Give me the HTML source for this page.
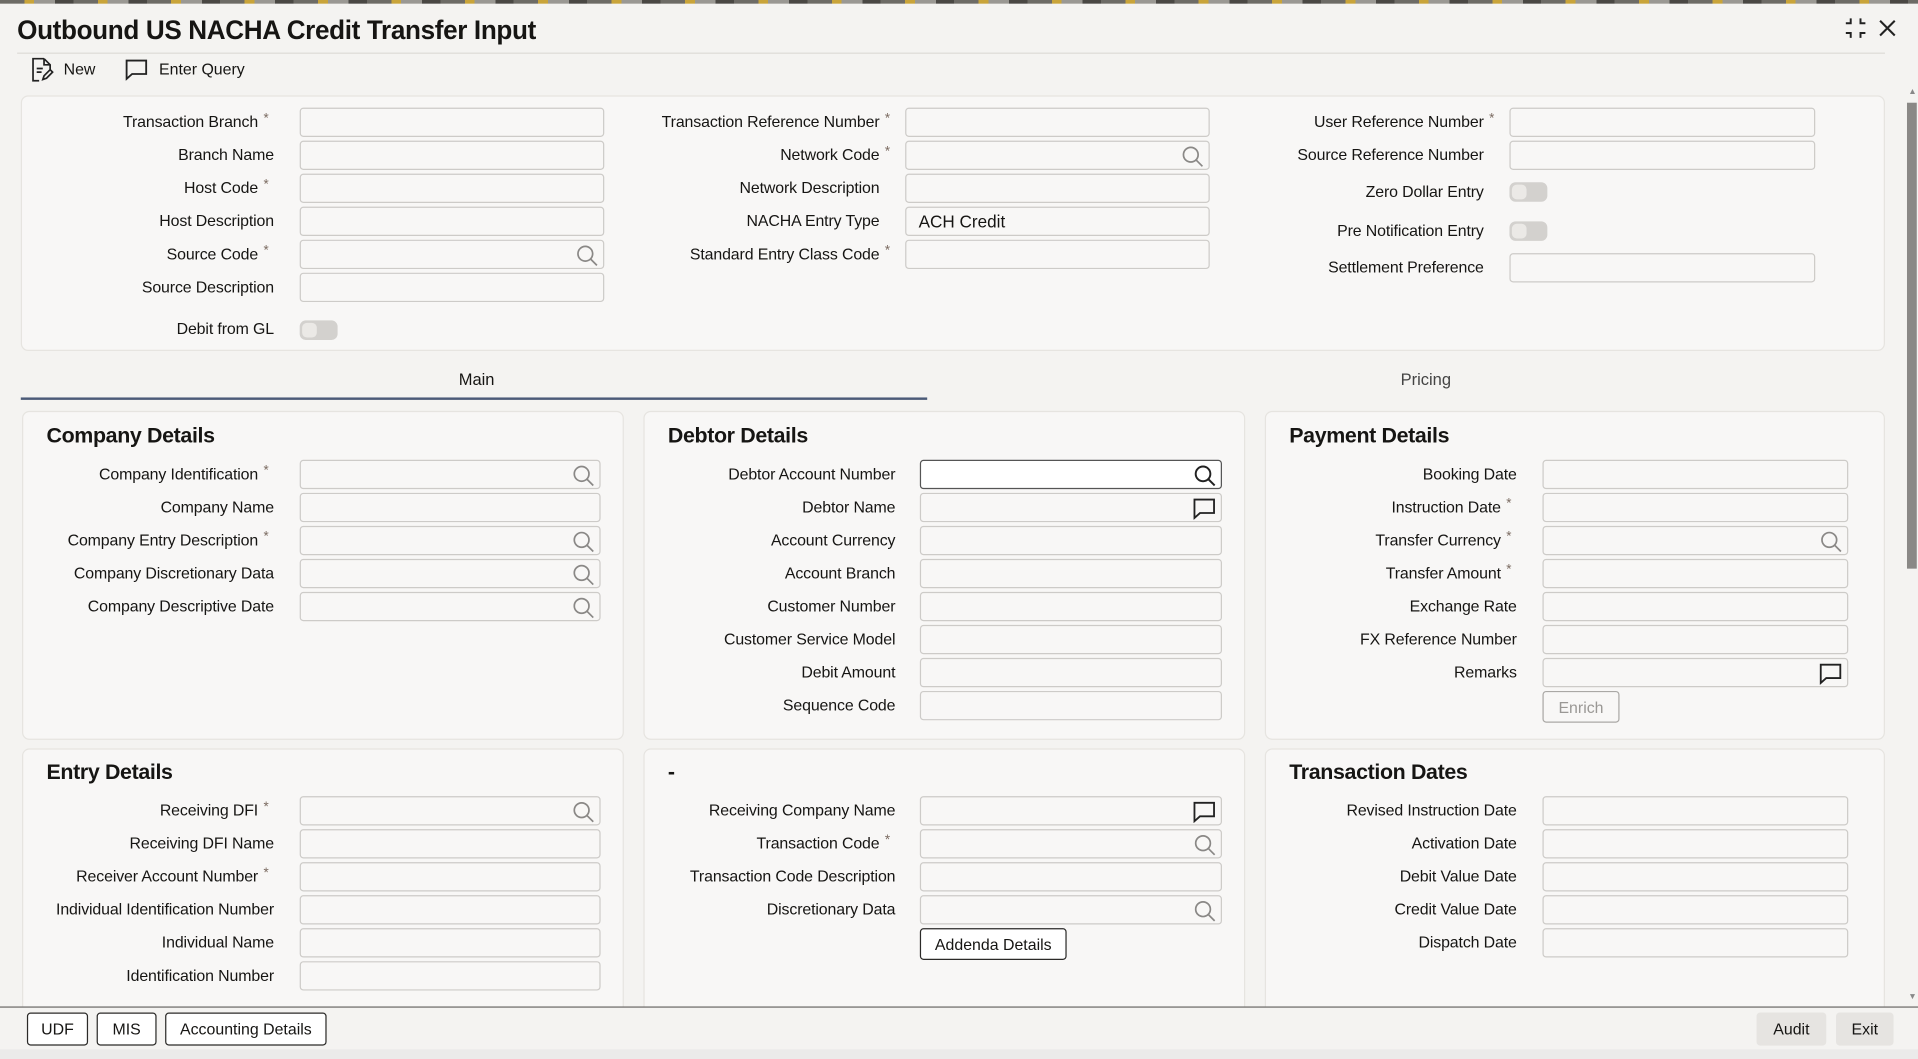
<!DOCTYPE html>
<html><head><meta charset="utf-8"><style>
html,body{margin:0;padding:0;width:1918px;height:1059px;overflow:hidden;background:#f3f2f0;font-family:"Liberation Sans",sans-serif;color:#161513}
#s{position:absolute;left:0;top:0;width:1568px;height:866px;transform:scale(1.22321,1.2229);transform-origin:0 0;background:#f4f3f1}
.a{position:absolute}
.l{position:absolute;left:0;text-align:right;font-size:13px;line-height:16px;white-space:nowrap;letter-spacing:-0.1px}
.l s{text-decoration:none;display:inline-block;width:13px;text-align:center;vertical-align:top;font-size:11px;line-height:10px;color:#7a6a60}
.i{position:absolute;height:24px;border:1px solid #cdcbc8;border-radius:3px;background:#f8f7f6;box-sizing:border-box}
.p{position:absolute;background:#f8f7f6;border:1px solid #e6e4e0;border-radius:6px;box-sizing:border-box}
.h{position:absolute;font-size:17.5px;font-weight:bold;letter-spacing:-0.3px}
.ic{position:absolute;right:4px;top:3px}
.t{position:absolute;width:31px;height:16px;border-radius:5px;background:#d3d1ce}
.t:after{content:"";position:absolute;left:2px;top:2px;width:12px;height:12px;border-radius:4px;background:#ebe9e6}
.b{position:absolute;height:27px;box-sizing:border-box;border:1px solid #2b2a28;border-radius:3px;background:#fff;font-size:13px;line-height:25px;text-align:center}
</style></head><body><div id="s">
<div class="a" style="left:0;top:0;width:1568px;height:3px;background:repeating-linear-gradient(90deg,#6d6b66 0 20px,#c9a43a 20px 28px,#9a9893 28px 45px,#4a4844 45px 60px)"></div>
<div class="a" style="left:14px;top:12px;font-size:22px;font-weight:bold;white-space:nowrap;transform:scaleX(0.97);transform-origin:0 0;letter-spacing:-0.3px">Outbound US NACHA Credit Transfer Input</div>
<svg class="a" style="left:1506px;top:13px" width="22" height="20" viewBox="0 0 22 20" fill="none" stroke="#222" stroke-width="1.6"><path d="M3 6h4V2M15 2v4h4M3 14h4v4M15 18v-4h4"/></svg>
<svg class="a" style="left:1536px;top:16px" width="14" height="14" viewBox="0 0 14 14" stroke="#222" stroke-width="1.7"><path d="M1 1l12 12M13 1L1 13"/></svg>
<div class="a" style="left:14px;top:43px;width:1527px;height:1px;background:#dddbd7"></div>
<svg class="a" style="left:24px;top:47px" width="20" height="20" viewBox="0 0 20 20" fill="none" stroke="#222" stroke-width="1.4"><path d="M12 1H3v18h5M12 1l5 5v5M12 1v5h5M6 9h5M6 12h4M11 18l1-3 5-5 2 2-5 5z"/></svg>
<div class="a" style="left:52px;top:49px;font-size:13px">New</div>
<svg class="a" style="left:102px;top:48px" width="19" height="18" viewBox="0 0 19 18" fill="none" stroke="#222" stroke-width="1.5"><path d="M1.5 1.5h16v11H6l-4.5 4z"/></svg>
<div class="a" style="left:130px;top:49px;font-size:13px">Enter Query</div>

<div class="p" style="left:17px;top:78px;width:1524px;height:209px"></div>
<div class="l" style="width:224px;top:92px">Transaction Branch<s>*</s></div><div class="i" style="left:245px;top:88px;width:249px"></div>
<div class="l" style="width:224px;top:119px">Branch Name</div><div class="i" style="left:245px;top:115px;width:249px"></div>
<div class="l" style="width:224px;top:146px">Host Code<s>*</s></div><div class="i" style="left:245px;top:142px;width:249px"></div>
<div class="l" style="width:224px;top:173px">Host Description</div><div class="i" style="left:245px;top:169px;width:249px"></div>
<div class="l" style="width:224px;top:200px">Source Code<s>*</s></div><div class="i" style="left:245px;top:196px;width:249px"><svg class="ic" width="18" height="18" viewBox="0 0 18 18" fill="none" stroke="#8a8886" stroke-width="1.4"><circle cx="7.5" cy="7.5" r="6"/><path d="M12 12l5 5"/></svg></div>
<div class="l" style="width:224px;top:227px">Source Description</div><div class="i" style="left:245px;top:223px;width:249px"></div>
<div class="l" style="width:224px;top:261px">Debit from GL</div><div class="t" style="left:245px;top:262px"></div>
<div class="l" style="width:732px;top:92px">Transaction Reference Number<s>*</s></div><div class="i" style="left:740px;top:88px;width:249px"></div>
<div class="l" style="width:732px;top:119px">Network Code<s>*</s></div><div class="i" style="left:740px;top:115px;width:249px"><svg class="ic" width="18" height="18" viewBox="0 0 18 18" fill="none" stroke="#8a8886" stroke-width="1.4"><circle cx="7.5" cy="7.5" r="6"/><path d="M12 12l5 5"/></svg></div>
<div class="l" style="width:719px;top:146px">Network Description</div><div class="i" style="left:740px;top:142px;width:249px"></div>
<div class="l" style="width:719px;top:173px">NACHA Entry Type</div><div class="i" style="left:740px;top:169px;width:249px;font-size:14px;line-height:22px;padding-left:10px">ACH Credit</div>
<div class="l" style="width:732px;top:200px">Standard Entry Class Code<s>*</s></div><div class="i" style="left:740px;top:196px;width:249px"></div>
<div class="l" style="width:1226px;top:92px">User Reference Number<s>*</s></div><div class="i" style="left:1234px;top:88px;width:250px"></div>
<div class="l" style="width:1213px;top:119px">Source Reference Number</div><div class="i" style="left:1234px;top:115px;width:250px"></div>
<div class="l" style="width:1213px;top:149px">Zero Dollar Entry</div><div class="t" style="left:1234px;top:149px"></div>
<div class="l" style="width:1213px;top:181px">Pre Notification Entry</div><div class="t" style="left:1234px;top:181px"></div>
<div class="l" style="width:1213px;top:211px">Settlement Preference</div><div class="i" style="left:1234px;top:207px;width:250px"></div>
<div class="a" style="left:1559px;top:84px;width:8px;height:381px;background:#8a8886"></div>
<div class="a" style="left:1560px;top:72px;font-size:7px;color:#888">▲</div>
<div class="a" style="left:1560px;top:812px;font-size:7px;color:#888">▼</div>
<div class="a" style="left:375px;top:303px;font-size:13.5px">Main</div>
<div class="a" style="left:1145px;top:303px;font-size:13.5px;color:#444">Pricing</div>
<div class="a" style="left:17px;top:325px;width:741px;height:2px;background:#4b5a78"></div>

<div class="p" style="left:18px;top:336px;width:492px;height:269px"></div>
<div class="p" style="left:526px;top:336px;width:492px;height:269px"></div>
<div class="p" style="left:1034px;top:336px;width:507px;height:269px"></div>
<div class="p" style="left:18px;top:612px;width:492px;height:240px"></div>
<div class="p" style="left:526px;top:612px;width:492px;height:240px"></div>
<div class="p" style="left:1034px;top:612px;width:507px;height:240px"></div>

<div class="h" style="left:38px;top:346px">Company Details</div>
<div class="l" style="width:224px;top:380px">Company Identification<s>*</s></div><div class="i" style="left:245px;top:376px;width:246px"><svg class="ic" width="18" height="18" viewBox="0 0 18 18" fill="none" stroke="#8a8886" stroke-width="1.4"><circle cx="7.5" cy="7.5" r="6"/><path d="M12 12l5 5"/></svg></div>
<div class="l" style="width:224px;top:407px">Company Name</div><div class="i" style="left:245px;top:403px;width:246px"></div>
<div class="l" style="width:224px;top:434px">Company Entry Description<s>*</s></div><div class="i" style="left:245px;top:430px;width:246px"><svg class="ic" width="18" height="18" viewBox="0 0 18 18" fill="none" stroke="#8a8886" stroke-width="1.4"><circle cx="7.5" cy="7.5" r="6"/><path d="M12 12l5 5"/></svg></div>
<div class="l" style="width:224px;top:461px">Company Discretionary Data</div><div class="i" style="left:245px;top:457px;width:246px"><svg class="ic" width="18" height="18" viewBox="0 0 18 18" fill="none" stroke="#8a8886" stroke-width="1.4"><circle cx="7.5" cy="7.5" r="6"/><path d="M12 12l5 5"/></svg></div>
<div class="l" style="width:224px;top:488px">Company Descriptive Date</div><div class="i" style="left:245px;top:484px;width:246px"><svg class="ic" width="18" height="18" viewBox="0 0 18 18" fill="none" stroke="#8a8886" stroke-width="1.4"><circle cx="7.5" cy="7.5" r="6"/><path d="M12 12l5 5"/></svg></div>

<div class="h" style="left:546px;top:346px">Debtor Details</div>
<div class="l" style="width:732px;top:380px">Debtor Account Number</div><div class="i" style="left:752px;top:376px;width:247px;background:#fff;border-color:#555"><svg class="ic" width="18" height="18" viewBox="0 0 18 18" fill="none" stroke="#222" stroke-width="1.6"><circle cx="7.5" cy="7.5" r="6"/><path d="M12 12l5 5"/></svg></div>
<div class="l" style="width:732px;top:407px">Debtor Name</div><div class="i" style="left:752px;top:403px;width:247px"><svg class="ic" width="19" height="18" viewBox="0 0 19 18" fill="none" stroke="#222" stroke-width="1.5"><path d="M1.5 1.5h16v11H6l-4.5 4z"/></svg></div>
<div class="l" style="width:732px;top:434px">Account Currency</div><div class="i" style="left:752px;top:430px;width:247px"></div>
<div class="l" style="width:732px;top:461px">Account Branch</div><div class="i" style="left:752px;top:457px;width:247px"></div>
<div class="l" style="width:732px;top:488px">Customer Number</div><div class="i" style="left:752px;top:484px;width:247px"></div>
<div class="l" style="width:732px;top:515px">Customer Service Model</div><div class="i" style="left:752px;top:511px;width:247px"></div>
<div class="l" style="width:732px;top:542px">Debit Amount</div><div class="i" style="left:752px;top:538px;width:247px"></div>
<div class="l" style="width:732px;top:569px">Sequence Code</div><div class="i" style="left:752px;top:565px;width:247px"></div>

<div class="h" style="left:1054px;top:346px">Payment Details</div>
<div class="l" style="width:1240px;top:380px">Booking Date</div><div class="i" style="left:1261px;top:376px;width:250px"></div>
<div class="l" style="width:1240px;top:407px">Instruction Date<s>*</s></div><div class="i" style="left:1261px;top:403px;width:250px"></div>
<div class="l" style="width:1240px;top:434px">Transfer Currency<s>*</s></div><div class="i" style="left:1261px;top:430px;width:250px"><svg class="ic" width="18" height="18" viewBox="0 0 18 18" fill="none" stroke="#8a8886" stroke-width="1.4"><circle cx="7.5" cy="7.5" r="6"/><path d="M12 12l5 5"/></svg></div>
<div class="l" style="width:1240px;top:461px">Transfer Amount<s>*</s></div><div class="i" style="left:1261px;top:457px;width:250px"></div>
<div class="l" style="width:1240px;top:488px">Exchange Rate</div><div class="i" style="left:1261px;top:484px;width:250px"></div>
<div class="l" style="width:1240px;top:515px">FX Reference Number</div><div class="i" style="left:1261px;top:511px;width:250px"></div>
<div class="l" style="width:1240px;top:542px">Remarks</div><div class="i" style="left:1261px;top:538px;width:250px"><svg class="ic" width="19" height="18" viewBox="0 0 19 18" fill="none" stroke="#222" stroke-width="1.5"><path d="M1.5 1.5h16v11H6l-4.5 4z"/></svg></div>
<div class="b" style="left:1261px;top:565px;width:63px;height:26px;border-color:#aaa8a5;color:#9a9895;background:#f8f7f6">Enrich</div>

<div class="h" style="left:38px;top:621px">Entry Details</div>
<div class="l" style="width:224px;top:655px">Receiving DFI<s>*</s></div><div class="i" style="left:245px;top:651px;width:246px"><svg class="ic" width="18" height="18" viewBox="0 0 18 18" fill="none" stroke="#8a8886" stroke-width="1.4"><circle cx="7.5" cy="7.5" r="6"/><path d="M12 12l5 5"/></svg></div>
<div class="l" style="width:224px;top:682px">Receiving DFI Name</div><div class="i" style="left:245px;top:678px;width:246px"></div>
<div class="l" style="width:224px;top:709px">Receiver Account Number<s>*</s></div><div class="i" style="left:245px;top:705px;width:246px"></div>
<div class="l" style="width:224px;top:736px">Individual Identification Number</div><div class="i" style="left:245px;top:732px;width:246px"></div>
<div class="l" style="width:224px;top:763px">Individual Name</div><div class="i" style="left:245px;top:759px;width:246px"></div>
<div class="l" style="width:224px;top:790px">Identification Number</div><div class="i" style="left:245px;top:786px;width:246px"></div>

<div class="h" style="left:546px;top:621px">-</div>
<div class="l" style="width:732px;top:655px">Receiving Company Name</div><div class="i" style="left:752px;top:651px;width:247px"><svg class="ic" width="19" height="18" viewBox="0 0 19 18" fill="none" stroke="#222" stroke-width="1.5"><path d="M1.5 1.5h16v11H6l-4.5 4z"/></svg></div>
<div class="l" style="width:732px;top:682px">Transaction Code<s>*</s></div><div class="i" style="left:752px;top:678px;width:247px"><svg class="ic" width="18" height="18" viewBox="0 0 18 18" fill="none" stroke="#8a8886" stroke-width="1.4"><circle cx="7.5" cy="7.5" r="6"/><path d="M12 12l5 5"/></svg></div>
<div class="l" style="width:732px;top:709px">Transaction Code Description</div><div class="i" style="left:752px;top:705px;width:247px"></div>
<div class="l" style="width:732px;top:736px">Discretionary Data</div><div class="i" style="left:752px;top:732px;width:247px"><svg class="ic" width="18" height="18" viewBox="0 0 18 18" fill="none" stroke="#8a8886" stroke-width="1.4"><circle cx="7.5" cy="7.5" r="6"/><path d="M12 12l5 5"/></svg></div>
<div class="b" style="left:752px;top:759px;width:120px;height:26px">Addenda Details</div>

<div class="h" style="left:1054px;top:621px">Transaction Dates</div>
<div class="l" style="width:1240px;top:655px">Revised Instruction Date</div><div class="i" style="left:1261px;top:651px;width:250px"></div>
<div class="l" style="width:1240px;top:682px">Activation Date</div><div class="i" style="left:1261px;top:678px;width:250px"></div>
<div class="l" style="width:1240px;top:709px">Debit Value Date</div><div class="i" style="left:1261px;top:705px;width:250px"></div>
<div class="l" style="width:1240px;top:736px">Credit Value Date</div><div class="i" style="left:1261px;top:732px;width:250px"></div>
<div class="l" style="width:1240px;top:763px">Dispatch Date</div><div class="i" style="left:1261px;top:759px;width:250px"></div>

<div class="a" style="left:0;top:823px;width:1568px;height:35px;background:#f4f3f1;border-top:1.5px solid #6b6966"></div>
<div class="b" style="left:22px;top:828px;width:50px">UDF</div>
<div class="b" style="left:79px;top:828px;width:49px">MIS</div>
<div class="b" style="left:135px;top:828px;width:132px">Accounting Details</div>
<div class="b" style="left:1436px;top:828px;width:57px;border:none;background:#e6e4e1;line-height:27px">Audit</div>
<div class="b" style="left:1501px;top:828px;width:47px;border:none;background:#e6e4e1;line-height:27px">Exit</div>
<div class="a" style="left:0;top:858px;width:1568px;height:8px;background:#ebebea"></div>
</div></body></html>
